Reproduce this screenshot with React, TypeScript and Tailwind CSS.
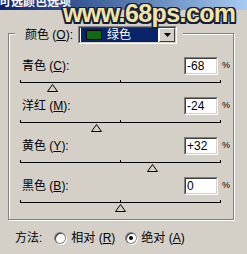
const rows = [
  { label: "青色", key: "C", text: "-68", value: -68 },
  { label: "洋红", key: "M", text: "-24", value: -24 },
  { label: "黄色", key: "Y", text: "+32", value: 32 },
  { label: "黑色", key: "B", text: "0", value: 0 },
];

const Sunken = ({ className, children }: { className?: string; children?: React.ReactNode }) => (
  <div className={`border border-t-[#808080] border-l-[#808080] border-b-white border-r-white ${className ?? ""}`}>
    <div className="w-full h-full border border-t-[#404040] border-l-[#404040] border-b-[#d4d0c8] border-r-[#d4d0c8] bg-white flex items-center">
      {children}
    </div>
  </div>
);

const Slider = ({ value }: { value: number }) => (
  <div className="relative ml-[-2px] mt-[4px] h-[16px]">
    <div className="flex">
      <div className="w-[100px] h-[3px] border-l border-b border-black" />
      <div className="w-[101px] h-[3px] border-l border-r border-b border-black" />
    </div>
    {/* thumb */}
    <svg
      width="11"
      height="8"
      viewBox="0 0 11 8"
      className="absolute top-[4px]"
      style={{ left: value + 100 - 5 }}
    >
      <path d="M5.5 0.5 L10.5 7.5 L0.5 7.5 Z" fill="#d4d0c8" stroke="#000" strokeWidth="1" />
    </svg>
  </div>
);

const Radio = ({ checked }: { checked?: boolean }) => (
  <div className="w-[12px] h-[12px] rounded-full bg-[#808080] p-[1px] shadow-[1px_1px_0_#fff]">
    <div className="w-full h-full rounded-full bg-white flex items-center justify-center shadow-[inset_1px_1px_0_#404040]">
      {checked && <div className="w-[4px] h-[4px] rounded-full bg-black" />}
    </div>
  </div>
);

export default function App() {
  return (
    <div className="w-[247px] h-[254px] bg-[#d4d0c8] relative overflow-hidden text-[12px] text-black font-['Liberation_Sans','Noto_Sans_CJK_SC',sans-serif]">
      <div className="h-[10px] overflow-hidden bg-linear-to-r from-[#0a246a] to-[#a6caf0]">
        <div className="-mt-[5px] -ml-[1px] text-white font-bold text-[12px] leading-[14px]">可选颜色选项</div>
      </div>

      <div className="absolute left-[63px] top-[1px] text-[25px] font-bold tracking-[-0.6px] leading-none text-[#f4e4a4] [text-shadow:1.5px_1.5px_0_#14203a,-1.5px_-1.5px_0_#14203a,1.5px_-1.5px_0_#14203a,-1.5px_1.5px_0_#14203a,0_1.5px_0_#14203a,0_-1.5px_0_#14203a,1.5px_0_0_#14203a,-1.5px_0_0_#14203a]">
        www.68ps.com
      </div>

      <div className="ml-[8px] mt-[23px] w-[226px] h-[187px] border border-[#808080] shadow-[inset_1px_1px_0_#fff,1px_1px_0_#fff]">
        <div className="flex items-center -mt-[8px] ml-[6px] w-fit h-[18px] bg-[#d4d0c8] pl-[10px] pr-[6px]">
          <span className="w-[53px]">
            颜色 (<u>O</u>):
          </span>
          <Sunken className="w-[99px] h-[18px]">
            <div className="flex-1 h-full bg-[#0a246a] flex items-center pl-[5px] gap-[5px] text-white m-[1px]">
              <div className="w-[16px] h-[10px] bg-[#0c6c14] border border-black" />
              <span>绿色</span>
            </div>
            <div className="w-[16px] h-full bg-[#d4d0c8] border border-t-white border-l-white border-b-[#404040] border-r-[#404040] flex items-center justify-center">
              <svg width="7" height="4" viewBox="0 0 7 4">
                <path d="M0 0 H7 L3.5 4 Z" fill="#000" />
              </svg>
            </div>
          </Sunken>
        </div>

        <div className="mt-[12px] pl-[13px] pr-[4px]">
          {rows.map((r) => (
            <div key={r.key} className="h-[40px]">
              <div className="flex items-center h-[20px]">
                <span className="flex-1">
                  {r.label} (<u>{r.key}</u>):
                </span>
                <Sunken className="w-[34px] h-[18px]">
                  <span className="pl-[1px]">{r.text}</span>
                </Sunken>
                <span className="w-[7px] ml-[4px] text-[9px]">%</span>
              </div>
              <Slider value={r.value} />
            </div>
          ))}
        </div>
      </div>

      <div className="flex items-center h-[14px] mt-[11px] pl-[15px]">
        <span>方法:</span>
        <div className="ml-[12px]">
          <Radio />
        </div>
        <span className="ml-[5px]">
          相对 (<u>R</u>)
        </span>
        <div className="ml-[10px]">
          <Radio checked />
        </div>
        <span className="ml-[4px]">
          绝对 (<u>A</u>)
        </span>
      </div>
    </div>
  );
}
